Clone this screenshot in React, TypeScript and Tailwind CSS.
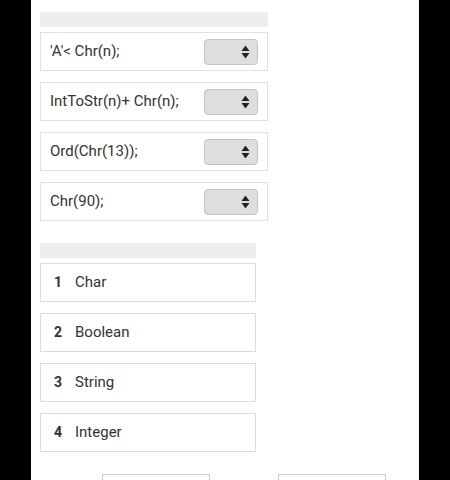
import { useState } from "react";

const pairs = ["'A'< Chr(n);", "IntToStr(n)+ Chr(n);", "Ord(Chr(13));", "Chr(90);"];
const answers = ["Char", "Boolean", "String", "Integer"];

const SortIcon = () => (
  <svg width="9" height="14" viewBox="0 0 9 14" className="block">
    <path d="M4.5 0.5 L8.5 6 L0.5 6 Z" fill="#222" />
    <path d="M4.5 13.5 L8.5 8 L0.5 8 Z" fill="#222" />
  </svg>
);

const MatchRow = ({ label }: { label: string }) => {
  const [value] = useState("");
  return (
    <div className="flex items-center justify-between h-[39px] border border-[#e0e0e0] pl-[9px] pr-[9px]">
      <span className="text-[15px] text-[#333]">{label}</span>
      <div className="flex items-center justify-end w-[54px] h-[26px] rounded-[4px] border border-[#c4c4c4] bg-[#dedede] pr-[7px]">
        <span className="hidden">{value}</span>
        <SortIcon />
      </div>
    </div>
  );
};

const AnswerRow = ({ n, label }: { n: number; label: string }) => (
  <div className="flex items-center h-[39px] border border-[#dcdcdc] pl-[13px]">
    <span className="w-[21px] text-[14px] font-bold text-[#333]">{n}</span>
    <span className="text-[15px] text-[#333]">{label}</span>
  </div>
);

export default function App() {
  return (
    <div
      className="h-[480px] bg-black flex overflow-hidden"
      style={{ fontFamily: "Roboto, 'Noto Sans', sans-serif" }}
    >
      <div className="ml-[31px] w-[388px] bg-white pl-[9px] pt-[12px]">
        <div className="w-[228px] flex flex-col gap-[11px]">
          <div className="h-[15px] bg-[#eeeeee] -mb-[6px]" />
          {pairs.map((p) => (
            <MatchRow key={p} label={p} />
          ))}
        </div>

        <div className="w-[216px] flex flex-col gap-[11px] mt-[22px]">
          <div className="h-[15px] bg-[#eeeeee] -mb-[6px]" />
          {answers.map((a, i) => (
            <AnswerRow key={a} n={i + 1} label={a} />
          ))}
        </div>

        <div className="flex mt-[22px] pl-[62px] gap-[68px]">
          <button className="w-[108px] h-[30px] border border-[#cfcfcf] bg-white" />
          <button className="w-[108px] h-[30px] border border-[#cfcfcf] bg-white" />
        </div>
      </div>
    </div>
  );
}
